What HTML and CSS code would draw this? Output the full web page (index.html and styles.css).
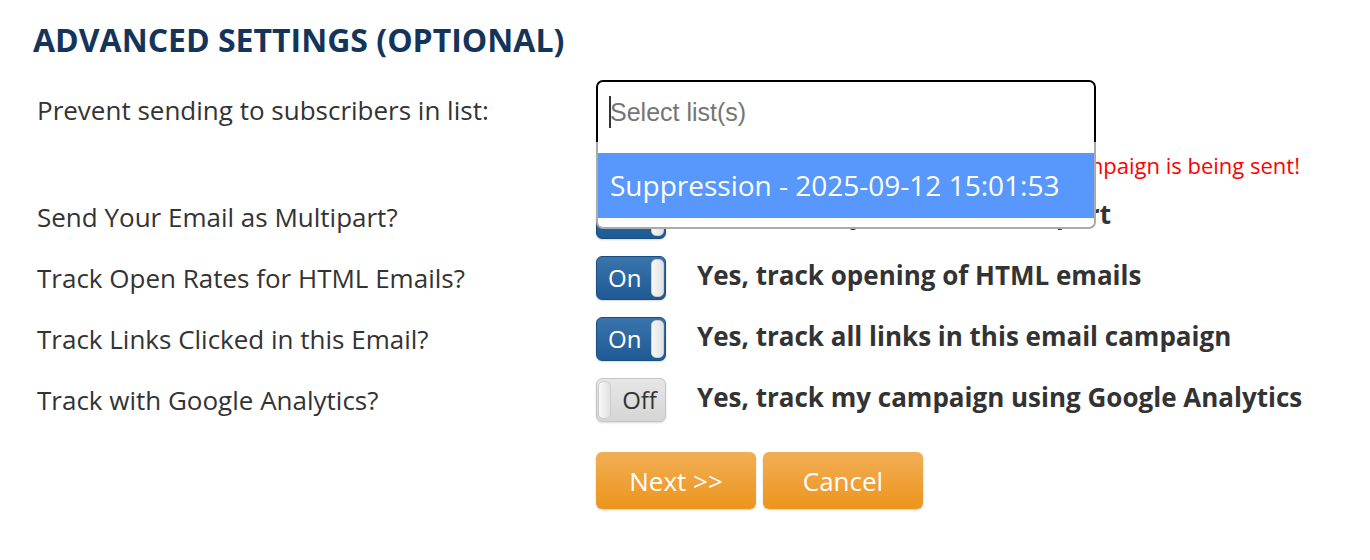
FILE: index.html
```html
<!DOCTYPE html>
<html>
<head>
<meta charset="utf-8">
<link rel="stylesheet" href="styles.css">
</head>
<body>
<div class="page">
  <h2 class="title">ADVANCED SETTINGS (OPTIONAL)</h2>
  <div class="form">
    <div class="row row-select">
      <div class="label">Prevent sending to subscribers in list:</div>
      <div class="control">
        <div class="select-wrap">
          <div class="select-box"><span class="caret"></span><span class="placeholder">Select list(s)</span></div>
          <div class="dropdown">
            <div class="option">Suppression - 2025-09-12 15:01:53</div>
          </div>
        </div>
      </div>
    </div>
    <div class="row row-note">
      <div class="label"></div>
      <div class="control"><div class="note">List members are skipped while the campaign is being sent!</div></div>
    </div>
    <div class="row">
      <div class="label">Send Your Email as Multipart?</div>
      <div class="control">
        <span class="toggle on"><span class="txt">On</span><span class="knob"></span></span>
        <span class="desc">Yes, send my email as multipart</span>
      </div>
    </div>
    <div class="row">
      <div class="label">Track Open Rates for HTML Emails?</div>
      <div class="control">
        <span class="toggle on"><span class="txt">On</span><span class="knob"></span></span>
        <span class="desc">Yes, track opening of HTML emails</span>
      </div>
    </div>
    <div class="row">
      <div class="label">Track Links Clicked in this Email?</div>
      <div class="control">
        <span class="toggle on"><span class="txt">On</span><span class="knob"></span></span>
        <span class="desc">Yes, track all links in this email campaign</span>
      </div>
    </div>
    <div class="row">
      <div class="label">Track with Google Analytics?</div>
      <div class="control">
        <span class="toggle off"><span class="knob"></span><span class="txt">Off</span></span>
        <span class="desc">Yes, track my campaign using Google Analytics</span>
      </div>
    </div>
    <div class="row row-buttons">
      <div class="label"></div>
      <div class="control">
        <button class="btn">Next &gt;&gt;</button>
        <button class="btn">Cancel</button>
      </div>
    </div>
  </div>
</div>
</body>
</html>
```
FILE: styles.css
```css
* { box-sizing: border-box; }
html, body { margin: 0; padding: 0; background: #fff; }
body { font-family: "Open Sans", "DejaVu Sans", sans-serif; color: #333; }
.page { padding: 19px 0 0 33px; width: 1370px; height: 560px; overflow: hidden; }
.title {
  margin: 0;
  font-size: 32px;
  font-weight: 700;
  color: #14345a;
  line-height: 42px;
}
.form { margin-top: 19px; padding-left: 4px; }
.row { display: flex; align-items: center; height: 61px; }
.label { width: 559px; flex: none; font-size: 26px; color: #333; }
.row-select .label { margin-top: -4px; }
.control { display: flex; align-items: center; flex: 1; }
.row-select { height: 64px; }
.row-note { height: 42px; align-items: flex-start; }
.select-wrap { position: relative; width: 500px; }
.select-box {
  height: 64px;
  border: 2px solid #000;
  border-radius: 7px 7px 0 0;
  display: flex;
  align-items: center;
  padding-left: 11px;
  background: #fff;
  font-family: "Liberation Sans", Arial, sans-serif;
  font-size: 25px;
}
.caret { width: 2px; height: 32px; background: #333; margin-right: -1px; }
.placeholder { color: #757575; }
.dropdown {
  position: absolute;
  left: 0; right: 0; top: 62px;
  height: 87px;
  border: 2px solid #aaa;
  border-top: 0;
  border-radius: 0 0 7px 7px;
  background: #fff;
  padding-top: 11px;
  z-index: 5;
}
.option {
  height: 65px;
  background: #5897fb;
  color: #fff;
  font-size: 28px;
  line-height: 65px;
  padding-left: 12px;
}
.note {
  width: 704px;
  text-align: right;
  color: #f00;
  font-size: 22px;
  padding-top: 6px;
  white-space: nowrap;
}
.toggle {
  position: relative;
  width: 70px; height: 44px;
  border-radius: 6px;
  flex: none;
  display: flex;
  align-items: center;
  padding: 3px;
  box-shadow: 0 1px 2px rgba(0,0,0,0.15);
  justify-content: space-between;
}
.toggle.on {
  background: linear-gradient(#3a74ad, #1f5a94);
  border: 1px solid #1b4d7e;
}
.toggle.off {
  background: linear-gradient(#e6e6e6, #d6d6d6);
  border: 1px solid #c4c4c4;
}
.toggle .txt { font-size: 24px; }
.toggle.on .txt { color: #fff; padding-left: 8px; }
.toggle.off .txt { color: #333; padding-right: 5px; }
.knob {
  width: 13px; height: 38px;
  border-radius: 5px;
  background: linear-gradient(90deg, #f7f7f7, #e2e2e2);
  border: 1px solid #ccc;
}
.toggle.on .knob { margin-right: -2px; }
.toggle.off .knob { margin-left: -2px; }
.desc { margin: 0 0 6px 31px; font-size: 26px; font-weight: 700; color: #333; white-space: nowrap; }
.row-buttons { height: 57px; margin-top: 22px; }
.btn {
  width: 160px; height: 57px;
  border: 0;
  border-radius: 6px;
  background: linear-gradient(#f2ae55, #ec951c);
  color: #fff;
  font-family: "Open Sans", sans-serif;
  font-size: 26px;
  margin-right: 7px;
  box-shadow: 0 1px 2px rgba(0,0,0,0.2);
  padding: 0;
}
```
